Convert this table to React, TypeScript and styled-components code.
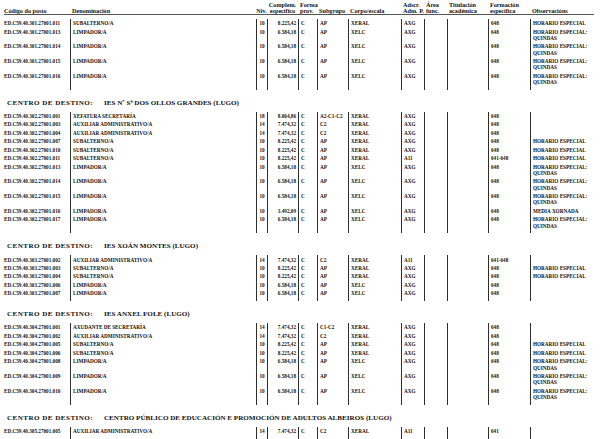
import React from 'react';
import styled, { createGlobalStyle } from 'styled-components';

type Post = {
  code: string;
  name: string;
  level: string;
  amount: string;
  group: string;
  body: string;
  adscr: string;
  training: string;
  notes?: string;
};

type Centre = {
  title?: string;
  posts: Post[];
};

const QUINDAS = 'HORARIO ESPECIAL:\nQUINDAS';
const ESPECIAL = 'HORARIO ESPECIAL';
const SERIF = '"Liberation Serif", "Times New Roman", serif';

const limpador = (code: string, notes = QUINDAS, amount = '6.584,18', body = 'XELC'): Post => ({
  code,
  name: 'LIMPADOR/A',
  level: '10',
  amount,
  group: 'AP',
  body,
  adscr: 'AXG',
  training: '648',
  notes,
});

const subalterno = (code: string, adscr = 'AXG', training = '648'): Post => ({
  code,
  name: 'SUBALTERNO/A',
  level: '10',
  amount: '8.225,42',
  group: 'AP',
  body: 'XERAL',
  adscr,
  training,
  notes: ESPECIAL,
});

const auxiliar = (code: string, adscr = 'AXG', training = '648'): Post => ({
  code,
  name: 'AUXILIAR ADMINISTRATIVO/A',
  level: '14',
  amount: '7.474,32',
  group: 'C2',
  body: 'XERAL',
  adscr,
  training,
});

const centres: Centre[] = [
  {
    posts: [
      subalterno('ED.C59.40.301.27001.011'),
      limpador('ED.C59.40.301.27001.013'),
      limpador('ED.C59.40.301.27001.014'),
      limpador('ED.C59.40.301.27001.015'),
      limpador('ED.C59.40.301.27001.016'),
    ],
  },
  {
    title: 'IES Nº Sª DOS OLLOS GRANDES (LUGO)',
    posts: [
      {
        code: 'ED.C59.40.302.27001.001',
        name: 'XEFATURA SECRETARÍA',
        level: '18',
        amount: '8.064,86',
        group: 'A2-C1-C2',
        body: 'XERAL',
        adscr: 'AXG',
        training: '648',
      },
      auxiliar('ED.C59.40.302.27001.003'),
      auxiliar('ED.C59.40.302.27001.004'),
      subalterno('ED.C59.40.302.27001.007'),
      subalterno('ED.C59.40.302.27001.010'),
      subalterno('ED.C59.40.302.27001.011', 'A11', '641-648'),
      limpador('ED.C59.40.302.27001.013'),
      limpador('ED.C59.40.302.27001.014'),
      limpador('ED.C59.40.302.27001.015'),
      limpador('ED.C59.40.302.27001.016', 'MEDIA XORNADA', '3.492,09'),
      limpador('ED.C59.40.302.27001.017'),
    ],
  },
  {
    title: 'IES XOÁN MONTES (LUGO)',
    posts: [
      auxiliar('ED.C59.40.303.27001.002', 'A11', '641-648'),
      subalterno('ED.C59.40.303.27001.003'),
      subalterno('ED.C59.40.303.27001.004'),
      limpador('ED.C59.40.303.27001.006', ''),
      limpador('ED.C59.40.303.27001.007', ''),
    ],
  },
  {
    title: 'IES ANXEL FOLE (LUGO)',
    posts: [
      { ...auxiliar('ED.C59.40.304.27001.001'), name: 'AXUDANTE DE SECRETARÍA', group: 'C1-C2' },
      auxiliar('ED.C59.40.304.27001.002'),
      subalterno('ED.C59.40.304.27001.005'),
      subalterno('ED.C59.40.304.27001.006'),
      limpador('ED.C59.40.304.27001.008'),
      limpador('ED.C59.40.304.27001.009'),
      limpador('ED.C59.40.304.27001.010'),
    ],
  },
  {
    title: 'CENTRO PÚBLICO DE EDUCACIÓN E PROMOCIÓN DE ADULTOS ALBEIROS (LUGO)',
    posts: [auxiliar('ED.C59.40.305.27001.005', 'A11', '641')],
  },
];

const GlobalStyle = createGlobalStyle`
  html, body {
    margin: 0;
    padding: 0;
    background: #fff;
  }
  body {
    font-family: ${SERIF};
    font-weight: bold;
    color: #111;
  }
`;

const COLUMNS = '66px 186px 11px 31px 19px 31px 53px 23px 23px 41px 42px 1fr';

const Page = styled.div`
  width: 615px;
  height: 439px;
  overflow: hidden;
  padding: 0 0 0 4px;
  box-sizing: border-box;
  font-family: ${SERIF};
`;

const HeaderRow = styled.div`
  display: grid;
  grid-template-columns: ${COLUMNS};
  width: 590px;
  height: 15px;
  box-sizing: border-box;
  padding-top: 2px;
  border-bottom: 1px solid #555;
  font-size: 6.2px;
  line-height: 6px;
`;

const HeadCell = styled.div<{ $align?: 'left' | 'center' | 'right' }>`
  display: flex;
  flex-direction: column;
  justify-content: flex-end;
  white-space: pre;
  padding-left: ${({ $align }) => ($align === 'center' ? 0 : 2)}px;
  text-align: ${({ $align }) => $align || 'left'};
  &:first-child {
    padding-left: 0;
  }
`;

const Table = styled.div`
  margin-top: 4px;
  display: flex;
  flex-direction: column;
`;

const Row = styled.div`
  display: grid;
  grid-template-columns: ${COLUMNS};
  font-size: 5.2px;
  line-height: 6.2px;
`;

const Cell = styled.div<{ $align?: 'left' | 'center' | 'right'; $line?: boolean }>`
  box-sizing: border-box;
  padding: 1.15px ${({ $align }) => ($align === 'right' ? 2 : 0)}px 1.15px
    ${({ $align, $line }) => ($align === 'left' && $line ? 2 : 0)}px;
  border-left: ${({ $line }) => ($line ? '1px solid #2e2e2e' : 'none')};
  text-align: ${({ $align }) => $align || 'left'};
  white-space: pre-line;
  overflow: hidden;
`;

const Tail = styled(Row)`
  height: 3.5px;
`;

const Heading = styled.h2`
  display: flex;
  align-items: baseline;
  margin: 9px 0 2px 3px;
  font-family: ${SERIF};
  font-size: 7.1px;
  line-height: 9px;
  font-weight: bold;
  white-space: nowrap;
`;

const HeadingLabel = styled.span`
  width: 97px;
  flex: none;
  letter-spacing: 0.45px;
`;

const headers: [string, 'left' | 'center' | 'right'][] = [
  ['Código do posto', 'left'],
  ['Denominación', 'left'],
  ['Niv.', 'center'],
  ['Complem.\nespecífico', 'center'],
  ['Forma\nprov.', 'left'],
  ['Subgrupo', 'left'],
  ['Corpo/escala', 'left'],
  ['Adscr.\nAdm. P.', 'left'],
  ['Área\nfunc.', 'left'],
  ['Titulación\nacadémica', 'left'],
  ['Formación\nespecífica', 'left'],
  ['Observacións', 'left'],
];

const PostRow = ({ post }: { post: Post }) => {
  const cells: [string, 'left' | 'center' | 'right'][] = [
    [post.code, 'left'],
    [post.name, 'left'],
    [post.level, 'center'],
    [post.amount, 'right'],
    ['C', 'left'],
    [post.group, 'left'],
    [post.body, 'left'],
    [post.adscr, 'left'],
    ['', 'left'],
    ['', 'left'],
    [post.training, 'left'],
    [post.notes || '', 'left'],
  ];

  return (
    <Row>
      {cells.map(([text, align], i) => (
        <Cell key={i} $align={align} $line={i > 0}>
          {text}
        </Cell>
      ))}
    </Row>
  );
};

const CentreTable = ({ centre }: { centre: Centre }) => (
  <>
    {centre.title && (
      <Heading>
        <HeadingLabel>CENTRO DE DESTINO:</HeadingLabel>
        <span>{centre.title}</span>
      </Heading>
    )}
    <Table>
      {centre.posts.map((post) => (
        <PostRow key={post.code} post={post} />
      ))}
      <Tail>
        {headers.map((_, i) => (
          <Cell key={i} $line={i > 0} />
        ))}
      </Tail>
    </Table>
  </>
);

const App = () => (
  <Page>
    <GlobalStyle />
    <HeaderRow>
      {headers.map(([label, align]) => (
        <HeadCell key={label} $align={align}>
          {label}
        </HeadCell>
      ))}
    </HeaderRow>
    {centres.map((centre, i) => (
      <CentreTable key={i} centre={centre} />
    ))}
  </Page>
);

export default App;
